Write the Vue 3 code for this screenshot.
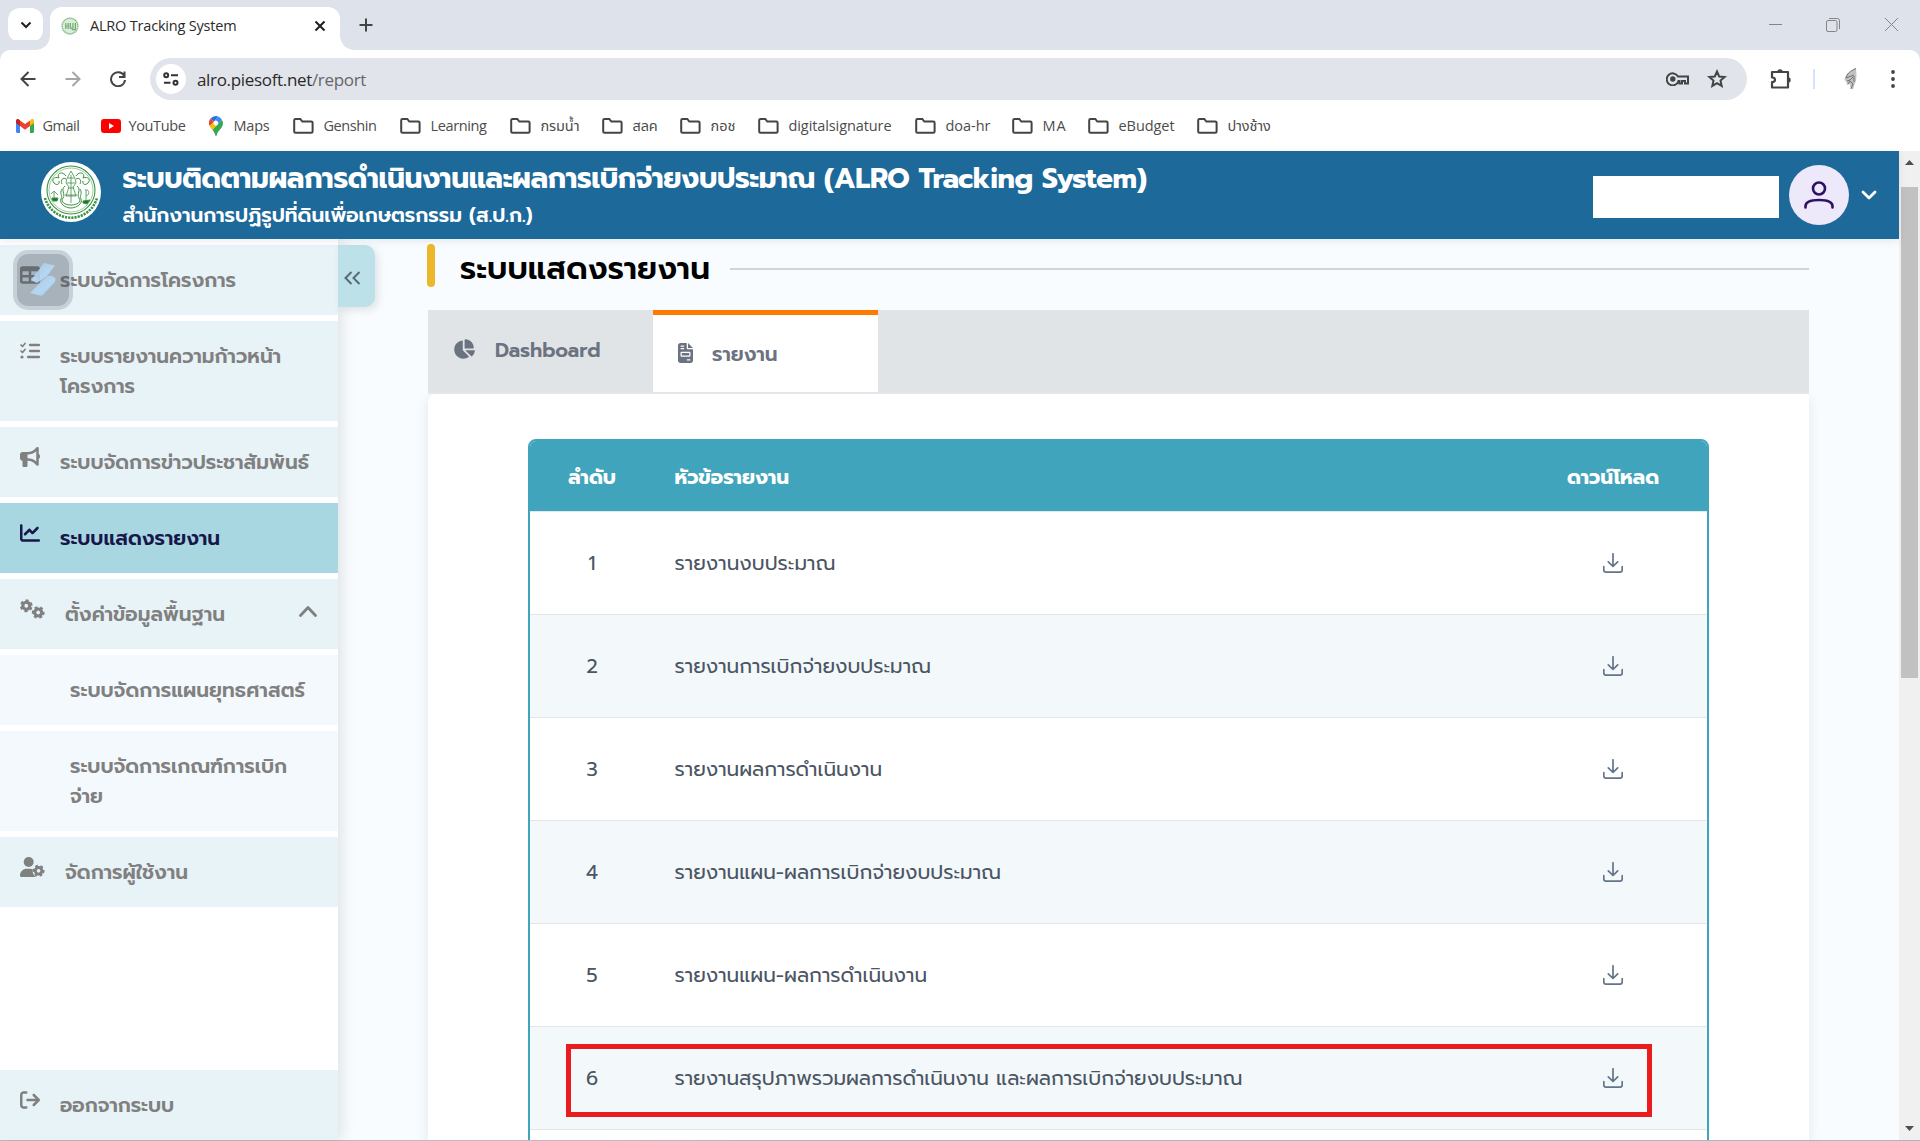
<script setup>
const bookmarks = [
  { icon: 'gmail', label: 'Gmail', slot: 86, text: 37 },
  { icon: 'youtube', label: 'YouTube', slot: 105, text: 57 },
  { icon: 'maps', label: 'Maps', slot: 90, text: 36 },
  { icon: 'folder', label: 'Genshin', slot: 107, text: 53 },
  { icon: 'folder', label: 'Learning', slot: 110, text: 56 },
  { icon: 'folder', label: 'กรมน้ำ', slot: 92, text: 39 },
  { icon: 'folder', label: 'สลค', slot: 78, text: 25 },
  { icon: 'folder', label: 'กอช', slot: 78, text: 25 },
  { icon: 'folder', label: 'digitalsignature', slot: 157, text: 103 },
  { icon: 'folder', label: 'doa-hr', slot: 97, text: 45 },
  { icon: 'folder', label: 'MA', slot: 76, text: 24 },
  { icon: 'folder', label: 'eBudget', slot: 109, text: 56 },
  { icon: 'folder', label: 'ปางช้าง', slot: 90, text: 43 },
]

const menu = [
  { icon: 'table', lines: [['ระบบจัดการโครงการ', 176]] },
  { icon: 'list', lines: [['ระบบรายงานความก้าวหน้า', 221], ['โครงการ', 75]] },
  { icon: 'horn', lines: [['ระบบจัดการข่าวประชาสัมพันธ์', 249]] },
  { icon: 'chart', active: true, lines: [['ระบบแสดงรายงาน', 160]] },
  { icon: 'gears', wide: true, open: true, lines: [['ตั้งค่าข้อมูลพื้นฐาน', 160]] },
  { sub: true, lines: [['ระบบจัดการแผนยุทธศาสตร์', 235]] },
  { sub: true, lines: [['ระบบจัดการเกณฑ์การเบิก', 217], ['จ่าย', 33]] },
  { icon: 'user', wide: true, lines: [['จัดการผู้ใช้งาน', 123]] },
  { icon: 'exit', bottom: true, lines: [['ออกจากระบบ', 114]] },
]

const reports = [
  ['รายงานงบประมาณ', 161],
  ['รายงานการเบิกจ่ายงบประมาณ', 256.5],
  ['รายงานผลการดำเนินงาน', 207.5],
  ['รายงานแผน-ผลการเบิกจ่ายงบประมาณ', 326.5],
  ['รายงานแผน-ผลการดำเนินงาน', 252.5],
  ['รายงานสรุปภาพรวมผลการดำเนินงาน และผลการเบิกจ่ายงบประมาณ', 568],
]

const glyphs = {
  table: 'M64 256V160H224v96H64zm0 64H224v96H64V320zm224 96V320H448v96H288zM448 256H288V160H448v96zM64 32C28.7 32 0 60.7 0 96V416c0 35.3 28.7 64 64 64H448c35.3 0 64-28.7 64-64V96c0-35.3-28.7-64-64-64H64z',
  horn: 'M480 32c0-12.9-7.8-24.6-19.8-29.6s-25.7-2.2-34.9 6.9L381.7 53c-48 48-113.1 75-181 75H192 160 64c-35.3 0-64 28.7-64 64v96c0 35.3 28.7 64 64 64l0 128c0 17.7 14.3 32 32 32h64c17.7 0 32-14.3 32-32V352l8.7 0c67.9 0 133 27 181 75l43.6 43.6c9.2 9.2 22.9 11.9 34.9 6.9s19.8-16.6 19.8-29.6V300.4c18.6-8.8 32-32.5 32-60.4s-13.4-51.6-32-60.4V32zm-64 76.7V240 371.3C357.2 317.8 280.5 288 200.7 288H192V192h8.7c79.8 0 156.5-29.8 215.3-83.3z',
  chart: 'M64 64c0-17.7-14.3-32-32-32S0 46.3 0 64V400c0 44.2 35.8 80 80 80H480c17.7 0 32-14.3 32-32s-14.3-32-32-32H80c-8.8 0-16-7.2-16-16V64zm406.6 86.6c12.5-12.5 12.5-32.8 0-45.3s-32.8-12.5-45.3 0L320 210.7l-57.4-57.4c-12.5-12.5-32.8-12.5-45.3 0l-112 112c-12.5 12.5-12.5 32.8 0 45.3s32.8 12.5 45.3 0L240 221.3l57.4 57.4c12.5 12.5 32.8 12.5 45.3 0l128-128z',
  exit: 'M502.6 278.6c12.5-12.5 12.5-32.8 0-45.3l-128-128c-12.5-12.5-32.8-12.5-45.3 0s-12.5 32.8 0 45.3L402.7 224 192 224c-17.7 0-32 14.3-32 32s14.3 32 32 32l210.7 0-73.4 73.4c-12.5 12.5-12.5 32.8 0 45.3s32.8 12.5 45.3 0l128-128zM160 96c17.7 0 32-14.3 32-32s-14.3-32-32-32L96 32C43 32 0 75 0 128L0 384c0 53 43 96 96 96l64 0c17.7 0 32-14.3 32-32s-14.3-32-32-32l-64 0c-17.7 0-32-14.3-32-32l0-256c0-17.7 14.3-32 32-32l64 0z',
}

// Tracks a label out (or in) so that it takes up the given width.
const vFit = {
  mounted(el, { value }) {
    const base = el.getBoundingClientRect().width
    el.style.letterSpacing = '1px'
    const step = el.getBoundingClientRect().width - base
    el.style.letterSpacing = step ? `${(value - base) / step}px` : '0'
  },
}
</script>

<template>
  <div class="window">
    <header class="tabstrip">
      <div class="tab-search">
        <svg width="12" height="8" viewBox="0 0 12 8"><path d="M1.5 1.5 6 6l4.500-4.500" fill="none" stroke="#1f1f1f" stroke-width="2" /></svg>
      </div>
      <div class="tab">
        <svg class="favicon" width="18" height="18" viewBox="0 0 60 60">
          <circle cx="30" cy="30" r="29" fill="#dcebdc" /><circle cx="30" cy="30" r="26" fill="none" stroke="#7ab87e" stroke-width="4" stroke-dasharray="5 2" />
          <path d="M16 20v20M16 30h8M24 20v20M31 20v17h9V20M48 20v22H36" fill="none" stroke="#6aae6e" stroke-width="4" />
        </svg>
        <span class="tab-title"><i v-fit="146.5">ALRO Tracking System</i></span>
        <svg class="tab-close" width="12" height="12" viewBox="0 0 12 12"><path d="m1.500 1.500 9 9m0-9-9 9" stroke="#1f1f1f" stroke-width="2" /></svg>
      </div>
      <svg class="new-tab" width="14" height="14" viewBox="0 0 14 14"><path d="M7 .5v13M.5 7h13" stroke="#444" stroke-width="2" /></svg>
      <div class="win-buttons">
        <svg width="13" height="13" viewBox="0 0 13 13"><path d="M0 6.500h13" stroke="#858585" /></svg>
        <svg width="14" height="14" viewBox="0 0 14 14" fill="none" stroke="#858585"><rect x=".5" y="2.500" width="10.500" height="11" rx="1.500" /><path d="M3 .5h8.500a2 2 0 0 1 2 2V11" /></svg>
        <svg width="13" height="13" viewBox="0 0 13 13"><path d="m0 0 13 13m0-13L0 13" stroke="#858585" /></svg>
      </div>
    </header>

    <div class="toolbar">
      <svg class="nav" width="16" height="16" viewBox="0 0 16 16" fill="none" stroke="#444" stroke-width="2"><path d="M15.500 8H2M8.500 1 1.500 8l7 7" /></svg>
      <svg class="nav" width="16" height="16" viewBox="0 0 16 16" fill="none" stroke="#a6a6a6" stroke-width="2"><path d="M.5 8H14M7.500 1l7 7-7 7" /></svg>
      <svg class="nav" width="16" height="16" viewBox="0 0 16 16" fill="none" stroke="#444" stroke-width="2"><path d="M14 4.500A7 7 0 1 0 15 9M14.500.5V6H9" /></svg>
      <div class="omnibox">
        <div class="site-info">
          <svg width="16" height="14" viewBox="0 0 16 14" fill="none" stroke="#333" stroke-width="2"><circle cx="3.200" cy="3.200" r="2" /><path d="M8 3.200h7M1 10.800h6.500" /><circle cx="12.500" cy="10.800" r="2" /></svg>
        </div>
        <span class="url"><i v-fit="169">alro.piesoft.net<em>/report</em></i></span>
        <svg class="key" width="23" height="14" viewBox="0 0 23 14"><circle cx="6.800" cy="7" r="2.700" fill="#444" /><path d="M12.500 4.500h9.500v7h-3V9h-3v2.500h-2.500v-2.500h-1A6 6 0 1 1 12 4.500z" fill="none" stroke="#444" stroke-width="2" /></svg>
        <svg class="star" width="20" height="20" viewBox="0 0 20 20"><path d="m10 2.500 2.200 5 5.400.5-4.100 3.600 1.200 5.300-4.700-2.800-4.700 2.800 1.200-5.300L2.400 8l5.400-.5z" fill="none" stroke="#444" stroke-width="2" /></svg>
      </div>
      <svg class="puzzle" width="22" height="22" viewBox="0 0 22 22"><path d="M2 4h16v15.500H2v-5.400c4 0 4-4.600 0-4.600z" fill="none" stroke="#444" stroke-width="2.200" stroke-linejoin="round" /><path d="M7.300 4a2.700 2.700 0 0 1 5.400 0zM18 9.200a2.700 2.700 0 0 1 0 5.400z" fill="#444" /></svg>
      <i class="divider"></i>
      <svg class="profile" width="18" height="24" viewBox="0 0 18 24"><path d="M15 1C8 4 4 8 3.500 13l2 2 .5 3 3-1 .5 5 1.500-1 1 2 1-4 2-5 .5-6z" fill="#c2c2c2" /><path d="M15 1.500C9 4 6 7 5 11l8-3m-7 6 3-1 3-3M7 17l2-3 3 3-2 5m3-13v6" fill="none" stroke="#666" stroke-width=".9" /></svg>
      <svg class="kebab" width="4" height="18" viewBox="0 0 4 18" fill="#444"><circle cx="2" cy="2" r="1.900" /><circle cx="2" cy="9" r="1.900" /><circle cx="2" cy="16" r="1.900" /></svg>
    </div>

    <nav class="bookmarks">
      <div v-for="b in bookmarks" :key="b.label" class="bookmark" :style="{ width: b.slot + 'px' }">
        <span class="mark" :class="b.icon">
          <svg v-if="b.icon === 'gmail'" width="18" height="14" viewBox="0 0 18 14"><path d="M0 2v10.500Q0 14 1.500 14H4V6z" fill="#4285f4" /><path d="M18 2v10.500q0 1.500-1.500 1.500H14V6z" fill="#34a853" /><path d="M14 2v5l4-3V2c0-2-2-2.500-3-1.500z" fill="#fbbc04" /><path d="M4 7V1.500L9 5l5-3.500V7l-5 3.700z" fill="#ea4335" /><path d="M0 2v2l4 3V1.300L3 .5C2-.5 0 0 0 2z" fill="#c5221f" /></svg>
          <svg v-else-if="b.icon === 'youtube'" width="20" height="14" viewBox="0 0 20 14"><rect width="20" height="14" rx="3" fill="red" /><path d="m8 4 5 3-5 3z" fill="#fff" /></svg>
          <svg v-else-if="b.icon === 'maps'" width="14" height="20" viewBox="0 0 14 20"><path d="M7 0a7 7 0 0 0-5.400 2.500L5 5.400 9.300.4A7 7 0 0 0 7 0z" fill="#1a73e8" /><path d="M1.600 2.500A7 7 0 0 0 .8 10.200L5 5.400z" fill="#ea4335" /><path d="M9.300.4 5 5.400a2.600 2.600 0 0 1 4 3.300l4-4.800A7 7 0 0 0 9.300.4z" fill="#4285f4" /><path d="M.8 10.200c.7 1.400 1.700 2.500 2.700 3.900L9 8.700A2.600 2.600 0 0 1 5 5.400z" fill="#fbbc04" /><path d="M13 3.900 3.500 14.100C5 16 5.800 17.600 6.200 19c.2 1.200 1.400 1.200 1.600 0 1-4.800 6.200-6.500 6.200-12 0-1.200-.4-2.200-1-3.100z" fill="#34a853" /></svg>
          <svg v-else width="21" height="16" viewBox="0 0 21 16"><path d="M1.200 2.300q0-1.300 1.300-1.300h4.800l2 2.500h9q1.300 0 1.300 1.300v8.700q0 1.300-1.300 1.300H2.500q-1.300 0-1.300-1.300z" fill="none" stroke="#444" stroke-width="2" /></svg>
        </span>
        <span class="mark-label"><i v-fit="b.text">{{ b.label }}</i></span>
      </div>
    </nav>

    <div class="viewport">
      <div class="page">
        <header class="banner">
          <svg class="emblem" width="60" height="60" viewBox="0 0 60 60" fill="none" stroke="#3d9344">
            <circle cx="30" cy="30" r="30" fill="#fff" stroke="none" />
            <circle cx="30" cy="28" r="24" stroke-width="1.100" /><circle cx="30" cy="28" r="22" stroke-width=".5" />
            <path d="M4 36a27 27 0 0 0 52 0" stroke-width="2.600" stroke-dasharray="2.200 1" />
            <path d="M30 9c-2 4-5 8-5 12l3 4-3 9h10l-3-9 3-4c0-4-3-8-5-12zm0 4v28m-4-20h8m-10 12h12m-9-17h6m-6 10h6" stroke-width=".8" />
            <path d="M25 14c-4-6-10-2-7 2-5-2-8 2-5 5s6 1 5-2m3 3c-2-4 1-7 4-5M35 14c4-6 10-2 7 2 5-2 8 2 5 5s-6 1-5-2m-3 3c2-4-1-7-4-5" />
            <path d="M24 24c-5 4 1 8-2 12s2 7 8 7 11-3 8-7 3-8-2-12M21 27c-3 5 1 6-1 10s4 9 10 9 12-5 10-9 2-5-1-10" />
            <path d="M13 38v-8m-3 2 3-3 4 4m-7 4h7m27-9c5-1 5 5 1 6m0-6v12" stroke-width=".8" />
            <path d="m11 36 6 0-1 3-4 0zm31 3 7-1-3 4-4-1z" fill="#147a1d" />
          </svg>
          <div class="titles">
            <b class="title"><i v-fit="1024">ระบบติดตามผลการดำเนินงานและผลการเบิกจ่ายงบประมาณ (ALRO Tracking System)</i></b>
            <b class="subtitle"><i v-fit="410">สำนักงานการปฏิรูปที่ดินเพื่อเกษตรกรรม (ส.ป.ก.)</i></b>
          </div>
          <div class="user-name"></div>
          <div class="avatar">
            <svg width="30" height="28" viewBox="0 0 30 28" fill="none" stroke="#2e1065" stroke-width="2.600" stroke-linecap="round"><circle cx="15" cy="7.500" r="6" /><path d="M1.500 26.500v-1.200C1.500 21.500 6 19 15 19s13.500 2.500 13.500 6.300v1.200" /></svg>
          </div>
          <svg class="caret" width="16" height="10" viewBox="0 0 16 10"><path d="m2 2 6 6 6-6" fill="none" stroke="#fff" stroke-width="2.800" stroke-linecap="round" stroke-linejoin="round" /></svg>
        </header>

        <div class="body">
          <aside class="sidebar">
            <div v-for="(m, k) in menu" :key="k" class="item" :class="{ active: m.active, sub: m.sub, wide: m.wide, bottom: m.bottom }">
              <span v-if="!m.sub" class="item-icon">
                <svg v-if="glyphs[m.icon]" width="20" height="20" viewBox="0 0 512 512" fill="currentColor"><path :d="glyphs[m.icon]" /></svg>
                <svg v-else-if="m.icon === 'list'" width="20" height="20" viewBox="0 0 20 20" fill="none" stroke="currentColor" stroke-linecap="round" stroke-linejoin="round"><path d="M10 4h9M10 10h9M8 16h11" stroke-width="2.300" /><path d="m1 4 1.500 1.500L5 2.500M1 10l1.500 1.500L5 8.500" stroke-width="1.700" /><circle cx="2" cy="16" r="1.600" fill="currentColor" stroke="none" /></svg>
                <svg v-else-if="m.icon === 'gears'" width="25" height="20" viewBox="0 0 25 20" fill="none" stroke="currentColor">
                  <g transform="translate(6.300 6.800) rotate(15)"><circle r="3.500" stroke-width="3.200" /><circle r="5.400" stroke-width="2" stroke-dasharray="3 2.655" /></g>
                  <g transform="translate(18.200 13.500) rotate(45)"><circle r="3.500" stroke-width="3.200" /><circle r="5.400" stroke-width="2" stroke-dasharray="3 2.655" /></g>
                </svg>
                <svg v-else width="25" height="20" viewBox="0 0 25 20">
                  <circle cx="8.700" cy="5" r="5" fill="currentColor" /><path d="M0 18.800C0 14.500 3 11.800 7 11.800h3.500c1 0 1.600.2 2.200.4-.4 3 .5 5.800 3.300 7.800H1.200Q0 20 0 18.800z" fill="currentColor" />
                  <g transform="translate(18.600 13.800) rotate(45)" fill="none" stroke="currentColor"><circle r="3.300" stroke-width="3" /><circle r="5" stroke-width="2" stroke-dasharray="2.800 2.436" /></g>
                </svg>
              </span>
              <span class="item-text">
                <span v-for="l in m.lines" :key="l[0]" class="line"><i v-fit="l[1]">{{ l[0] }}</i></span>
              </span>
              <svg v-if="m.open" class="fold" width="18" height="11" viewBox="0 0 18 11"><path d="m1.500 9.500 7.500-8 7.500 8" fill="none" stroke="currentColor" stroke-width="2.800" stroke-linecap="round" stroke-linejoin="round" /></svg>
            </div>
            <div class="collapse">
              <svg width="17" height="14" viewBox="0 0 17 14"><path d="M7.500 1 1.500 7l6 6M15.500 1l-6 6 6 6" fill="none" stroke="#5a6872" stroke-width="2" /></svg>
            </div>
            <div class="floater">
              <svg width="26" height="34" viewBox="0 0 26 34"><defs><linearGradient id="blade" x1="0" y1="0" x2="1" y2="1"><stop offset="0" stop-color="#a5cdf2" /><stop offset=".6" stop-color="#b9dcf8" /><stop offset="1" stop-color="#8fc0ec" /></linearGradient></defs><path d="M14 0 25 2.500 17 13 7 20 1 17z" fill="url(#blade)" /><path d="M15 15q4-4 9-1 3 2 0 6L12 33 0 30z" fill="url(#blade)" /></svg>
            </div>
          </aside>

          <main class="content">
            <div class="heading">
              <i class="accent"></i>
              <h1><i v-fit="250">ระบบแสดงรายงาน</i></h1>
              <i class="rule"></i>
            </div>
            <div class="tabs">
              <div class="ptab">
                <svg width="22" height="20" viewBox="0 0 576 512" fill="currentColor"><path d="M304 240V16.600c0-9 7-16.600 16-16.600C443.700 0 544 100.300 544 224c0 9-7.600 16-16.600 16H304zM32 272C32 150.700 122.100 50.300 239 34.300c9.200-1.300 17 6.100 17 15.400V288L412.500 444.500c6.700 6.700 6.200 17.700-1.500 23.100C371.800 495.600 323.800 512 272 512C139.500 512 32 404.600 32 272zm526.400 16c9.300 0 16.600 7.800 15.400 17c-7.700 55.900-34.600 105.600-73.900 142.300c-6 5.600-15.400 5.200-21.200-.7L320 288H558.400z" /></svg>
                <span><i v-fit="105.5">Dashboard</i></span>
              </div>
              <div class="ptab on">
                <svg width="15" height="20" viewBox="0 0 384 512" fill="currentColor"><path d="M64 0C28.700 0 0 28.700 0 64V448c0 35.300 28.700 64 64 64H320c35.300 0 64-28.700 64-64V160H256c-17.700 0-32-14.300-32-32V0H64zM256 0V128H384L256 0zM80 64h64c8.800 0 16 7.200 16 16s-7.200 16-16 16H80c-8.800 0-16-7.200-16-16s7.200-16 16-16zm0 64h64c8.800 0 16 7.200 16 16s-7.200 16-16 16H80c-8.800 0-16-7.200-16-16s7.200-16 16-16zm16 96H288c17.700 0 32 14.300 32 32v64c0 17.700-14.300 32-32 32H96c-17.700 0-32-14.300-32-32V256c0-17.700 14.300-32 32-32zm0 32v64H288V256H96zM240 416h64c8.800 0 16 7.200 16 16s-7.200 16-16 16H240c-8.800 0-16-7.200-16-16s7.200-16 16-16z" /></svg>
                <span><i v-fit="65.500">รายงาน</i></span>
              </div>
            </div>
            <section class="card">
              <div class="table">
                <div class="row head">
                  <span class="no"><i v-fit="48">ลำดับ</i></span>
                  <span class="name"><i v-fit="114.500">หัวข้อรายงาน</i></span>
                  <span class="dl"><i v-fit="92">ดาวน์โหลด</i></span>
                </div>
                <div v-for="(r, k) in reports" :key="k" class="row">
                  <span class="no">{{ k + 1 }}</span>
                  <span class="name"><i v-fit="r[1]">{{ r[0] }}</i></span>
                  <span class="dl">
                    <svg width="20" height="20" viewBox="0 0 20 20" fill="none" stroke="#64748b" stroke-width="1.700" stroke-linecap="round" stroke-linejoin="round"><path d="M10 .8v12.500M5.300 8.800l4.700 4.700 4.700-4.700M.8 13.500V17q0 2.200 2.200 2.200h14q2.200 0 2.200-2.200v-3.500" /></svg>
                  </span>
                </div>
                <div class="row"></div>
                <div class="highlight"></div>
              </div>
            </section>
          </main>
        </div>
      </div>
      <div class="scrollbar">
        <svg width="9" height="5" viewBox="0 0 9 5"><path d="M4.500 0 9 5H0z" fill="#505050" /></svg>
        <i class="thumb"></i>
        <svg width="9" height="5" viewBox="0 0 9 5"><path d="M0 0h9L4.500 5z" fill="#505050" /></svg>
      </div>
    </div>
    <div class="edge"></div>
  </div>
</template>

<style>
body { margin: 0; overflow: hidden; }
</style>

<style scoped>
* { box-sizing: border-box; }
svg { display: block; flex: none; }
i, em { font-style: normal; }
span, b, h1 { white-space: nowrap; }
.window { width: 1920px; height: 1141px; overflow: hidden; display: flex; flex-direction: column; background: #fff; font-family: "Prompt", "Noto Sans Thai", "Noto Sans", "Open Sans", sans-serif; }

.tabstrip { flex: none; height: 50px; background: #dee2ea; display: flex; padding-left: 8px; }
.tab-search { width: 35px; height: 34px; margin-top: 8px; background: #fff; border-radius: 12px; display: flex; align-items: center; justify-content: center; }
.tab { position: relative; margin: 7px 0 0 7px; width: 290px; height: 43px; background: #fff; border-radius: 12px 12px 0 0; display: flex; align-items: center; padding: 0 14px 5px 11px; }
.tab::before, .tab::after { content: ""; position: absolute; bottom: 0; width: 14px; height: 14px; }
.tab::before { left: -14px; background: radial-gradient(circle at 0 0, transparent 13.5px, #fff 14px); }
.tab::after { right: -14px; background: radial-gradient(circle at 100% 0, transparent 13.5px, #fff 14px); }
.tab-title { margin-left: 11px; font: 14.5px/20px "Open Sans", "Noto Sans", sans-serif; color: #2a2a2a; flex: 1; }
.new-tab { margin: 18px 0 0 19px; }
.win-buttons { margin-left: auto; padding: 18px 22px 0 0; display: flex; gap: 44px; }
.win-buttons svg:nth-child(2) { margin-right: 1px; }

.toolbar { flex: none; height: 58px; display: flex; align-items: center; padding-left: 20px; background: #fff; border-radius: 10px 10px 0 0; box-shadow: 0 -10px 0 #dee2ea; }
.nav { margin-right: 29px; }
.omnibox { width: 1597px; height: 42px; margin-left: -5px; border-radius: 21px; background: #e1e4eb; display: flex; align-items: center; padding: 0 20px 0 6px; }
.site-info { width: 30px; height: 30px; border-radius: 50%; background: #fff; display: flex; align-items: center; justify-content: center; }
.url { margin-left: 11px; padding-top: 2px; flex: 1; font: 17px/24px "Open Sans", "Noto Sans", sans-serif; color: #2a2a2a; }
.url em { color: #66666a; }
.star { margin-left: 18px; }
.puzzle { margin-left: 23px; }
.divider { width: 2px; height: 20px; margin-left: 21px; background: #d3e3fd; }
.profile { margin-left: 26px; }
.kebab { margin-left: 32px; }

.bookmarks { flex: none; height: 43px; display: flex; padding: 0 0 7px 12px; background: #fff; }
.bookmark { flex: none; display: flex; align-items: center; }
.mark { width: 30.5px; flex: none; }
.gmail { padding-left: 4px; }
.youtube { padding-left: 3px; }
.maps { padding-left: 6px; }
.mark-label { font: 14.5px/20px "Open Sans", "Noto Sans Thai", "Noto Sans", sans-serif; color: #4c4c4c; }

.viewport { flex: 1; min-height: 0; display: flex; }
.page { width: 1899px; background: #f8fcff; display: flex; flex-direction: column; }
.banner { position: relative; z-index: 2; flex: none; height: 88px; background: #1c699a; display: flex; align-items: center; padding-left: 41px; color: #fff; box-shadow: 0 2px 8px rgba(0, 0, 0, .08); }
.emblem { margin-top: -7px; }
.titles { margin-left: 21.5px; flex: 1; display: flex; flex-direction: column; }
.title { font-size: 28px; line-height: 40px; font-weight: 700; margin-top: -1px; }
.subtitle { font-size: 20px; line-height: 30px; font-weight: 600; margin-top: 1px; }
.user-name { width: 186px; height: 42px; margin-top: 4px; background: #fff; }
.avatar { width: 60px; height: 60px; margin-left: 10px; border-radius: 50%; background: #ede9fb; display: flex; align-items: center; justify-content: center; }
.caret { margin: 0 22px 0 12px; }

.body { flex: 1; min-height: 0; display: flex; }
.sidebar { position: relative; z-index: 1; width: 338px; flex: none; background: #fff; display: flex; flex-direction: column; gap: 6px; padding-top: 6px; box-shadow: 3px 0 14px rgba(0, 0, 0, .11); }
.item { flex: none; display: flex; padding: 20px; background: #e8f3f8; color: #808080; }
.item.active { background: #a8d6e1; color: #17174a; }
.item.sub { padding-left: 70px; background: #f4f9fd; }
.item.bottom { margin-top: auto; }
.item-icon { width: 40px; }
.wide .item-icon { width: 45px; }
.item-text { flex: 1; display: flex; flex-direction: column; }
.line { font-size: 20px; line-height: 30px; font-weight: 600; }
.fold { margin: 7px 1px 0 0; }
.collapse { position: absolute; left: 338px; top: 6px; width: 37px; height: 62px; border-radius: 0 10px 10px 0; background: #bde1e9; display: flex; align-items: center; padding: 4px 0 0 6px; box-shadow: 3px 3px 9px rgba(0, 0, 0, .1); }
.floater { position: absolute; left: 13px; top: 11px; width: 60px; height: 60px; border-radius: 15px; border: 4px solid rgba(110, 120, 132, .28); background: rgba(70, 80, 92, .4); background-clip: padding-box; display: flex; align-items: center; justify-content: center; }
.floater svg { opacity: .88; }

.content { width: 1382px; margin-left: 89px; display: flex; flex-direction: column; }
.heading { flex: none; height: 71px; display: flex; padding-top: 5px; }
.accent { width: 8px; height: 43px; border-radius: 4px; background: #edb72b; }
h1 { margin: 2px 0 0 25px; font-size: 31px; line-height: 45px; font-weight: 600; color: #000; width: 250px; }
.rule { flex: 1; height: 2px; margin: 24px 0 0 20px; background: #d1d5db; }
.tabs { flex: none; height: 84px; margin-left: 1px; background: #e1e4e7; border-bottom: 2px solid #e4e6eb; display: flex; }
.ptab { width: 225px; display: flex; align-items: center; padding-left: 25px; color: #6b7280; font-size: 20px; line-height: 30px; font-weight: 600; }
.ptab svg { margin-top: -4px; }
.ptab span { margin: -2px 0 0 20px; }
.ptab.on { background: #fff; border-top: 5px solid #ff7a00; }
.ptab.on svg { margin-top: -1px; }
.ptab.on span { margin: 1px 0 0 19px; }
.card { flex: 1; min-height: 0; overflow: hidden; margin-left: 1px; padding: 45px 100px 0; background: #fff; border-radius: 8px 0 0 0; box-shadow: 0 3px 14px rgba(0, 0, 0, .09); clip-path: inset(0 -20px 0 -20px); }
.table { position: relative; width: 1181px; height: 760px; border: 2px solid #3fa4bc; border-radius: 8px; overflow: hidden; }
.row { height: 103px; display: flex; align-items: center; border-top: 1px solid #e3e7ea; font-size: 20px; line-height: 30px; color: #4b5563; }
.row:nth-child(odd) { background: #f3f8fb; }
.row.head { height: 70px; padding-top: 2px; border-top: 0; background: #3fa4bc; color: #fff; font-weight: 700; }
.no { width: 124px; text-align: center; }
.name { flex: 1; margin-left: 20.5px; }
.dl { width: 188px; display: flex; justify-content: center; }
.highlight { position: absolute; left: 36px; top: 603px; width: 1086px; height: 73px; border: 5px solid #eb1c1e; outline: 1px solid rgba(235, 28, 30, .2); outline-offset: -1px; }

.scrollbar { width: 21px; background: #f0f0f0; display: flex; flex-direction: column; align-items: center; padding: 9px 0 9px; }
.thumb { width: 17px; height: 491px; margin: 22px 0 auto; background: #c1c1c1; }
.edge { flex: none; height: 1px; background: linear-gradient(90deg, #c9b9b3, #c9b9b3 30%, #aab8be 40%); }
</style>
